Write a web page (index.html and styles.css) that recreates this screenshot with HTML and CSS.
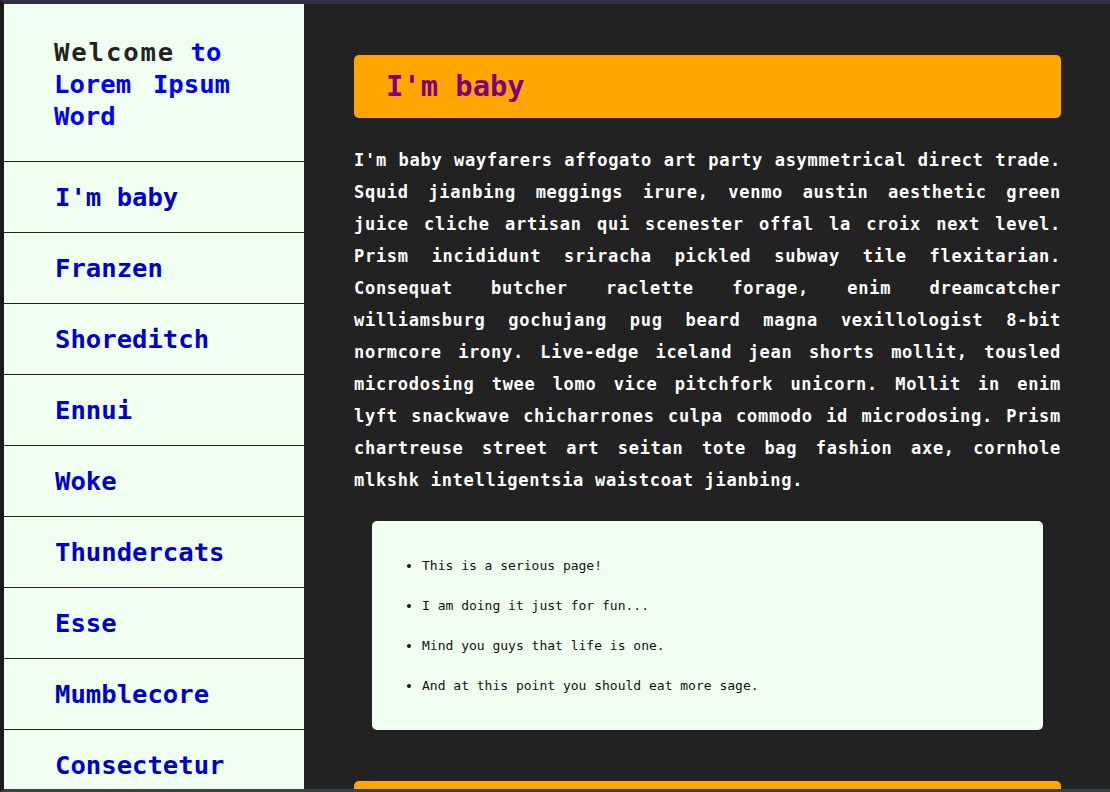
FILE: index.html
```html
<!DOCTYPE html>
<html lang="en">
<head>
<meta charset="utf-8">
<title>Lorem Ipsum Word</title>
<link rel="stylesheet" href="styles.css">
</head>
<body>
<div class="window">
  <aside class="sidebar">
    <header class="side-head">
      <h1 class="title"><span class="title-first"><span class="title-welcome">Welcome</span> to</span> Lorem Ipsum Word</h1>
    </header>
    <nav class="nav">
      <a class="nav-link" href="#">I'm baby</a>
      <a class="nav-link" href="#">Franzen</a>
      <a class="nav-link" href="#">Shoreditch</a>
      <a class="nav-link" href="#">Ennui</a>
      <a class="nav-link" href="#">Woke</a>
      <a class="nav-link" href="#">Thundercats</a>
      <a class="nav-link" href="#">Esse</a>
      <a class="nav-link" href="#">Mumblecore</a>
      <a class="nav-link" href="#">Consectetur</a>
    </nav>
  </aside>
  <main class="main">
    <section class="section">
      <h2 class="section-title">I'm baby</h2>
      <p class="section-text">I'm baby wayfarers affogato art party asymmetrical direct trade. Squid jianbing meggings irure, venmo austin aesthetic green juice cliche artisan qui scenester offal la croix next level. Prism incididunt sriracha pickled subway tile flexitarian. Consequat butcher raclette forage, enim dreamcatcher williamsburg gochujang pug beard magna vexillologist 8-bit normcore irony. Live-edge iceland jean shorts mollit, tousled microdosing twee lomo vice pitchfork unicorn. Mollit in enim lyft snackwave chicharrones culpa commodo id microdosing. Prism chartreuse street art seitan tote bag fashion axe, cornhole mlkshk intelligentsia waistcoat jianbing.</p>
      <div class="note">
        <ul class="note-list">
          <li>This is a serious page!</li>
          <li>I am doing it just for fun...</li>
          <li>Mind you guys that life is one.</li>
          <li>And at this point you should eat more sage.</li>
        </ul>
      </div>
    </section>
    <section class="section">
      <h2 class="section-title">Franzen</h2>
    </section>
  </main>
</div>
</body>
</html>
```

FILE: styles.css
```css
* { box-sizing: border-box; }
html, body { margin: 0; padding: 0; }
body {
  background: #222222;
  font-family: "DejaVu Sans Mono", "Liberation Mono", monospace;
}
.window {
  display: flex;
  height: 792px;
  overflow: hidden;
  border-top: 4px solid #30303e;
  border-left: 4px solid #1b1b1b;
  border-bottom: 3px solid #3b3f48;
}
.sidebar {
  flex: 0 0 300px;
  background: #f0fff0;
  display: flex;
  flex-direction: column;
}
.side-head {
  padding: 32px 20px 29px 50px;
  border-bottom: 1px solid #222;
}
.title {
  margin: 0;
  width: 176px;
  font-size: 25.6px;
  line-height: 32px;
  font-weight: bold;
  color: #0000ff;
  text-align: justify;
}
.title-first { display: inline-block; }
.title-welcome {
  color: #222;
  letter-spacing: 1.9px;
}
.nav { display: flex; flex-direction: column; }
.nav-link {
  display: block;
  padding: 20px 0 20px 51px;
  font-size: 25.6px;
  line-height: 30px;
  font-weight: bold;
  color: #0000cd;
  text-decoration: none;
  border-bottom: 1px solid #222;
}
.main {
  flex: 1;
  padding: 51px 49px 0 50px;
  background: #222222;
}
.section + .section { margin-top: 51px; }
.section-title {
  margin: 0;
  height: 63px;
  padding: 15px 32px;
  background: #ffa500;
  border-radius: 5px;
  color: #800080;
  font-size: 28.8px;
  line-height: 33px;
  font-weight: bold;
}
.section-text {
  margin: 26px 0 25px;
  color: #ffffff;
  font-size: 17px;
  letter-spacing: 0.72px;
  line-height: 32px;
  font-weight: bold;
  text-align: justify;
}
.note {
  margin: 0 18px;
  background: #f0fff0;
  border-radius: 5px;
  padding: 25px 20px 24px 50px;
}
.note-list {
  margin: 0;
  padding: 0;
  font-size: 13px;
  line-height: 40px;
  color: #111;
}
```
